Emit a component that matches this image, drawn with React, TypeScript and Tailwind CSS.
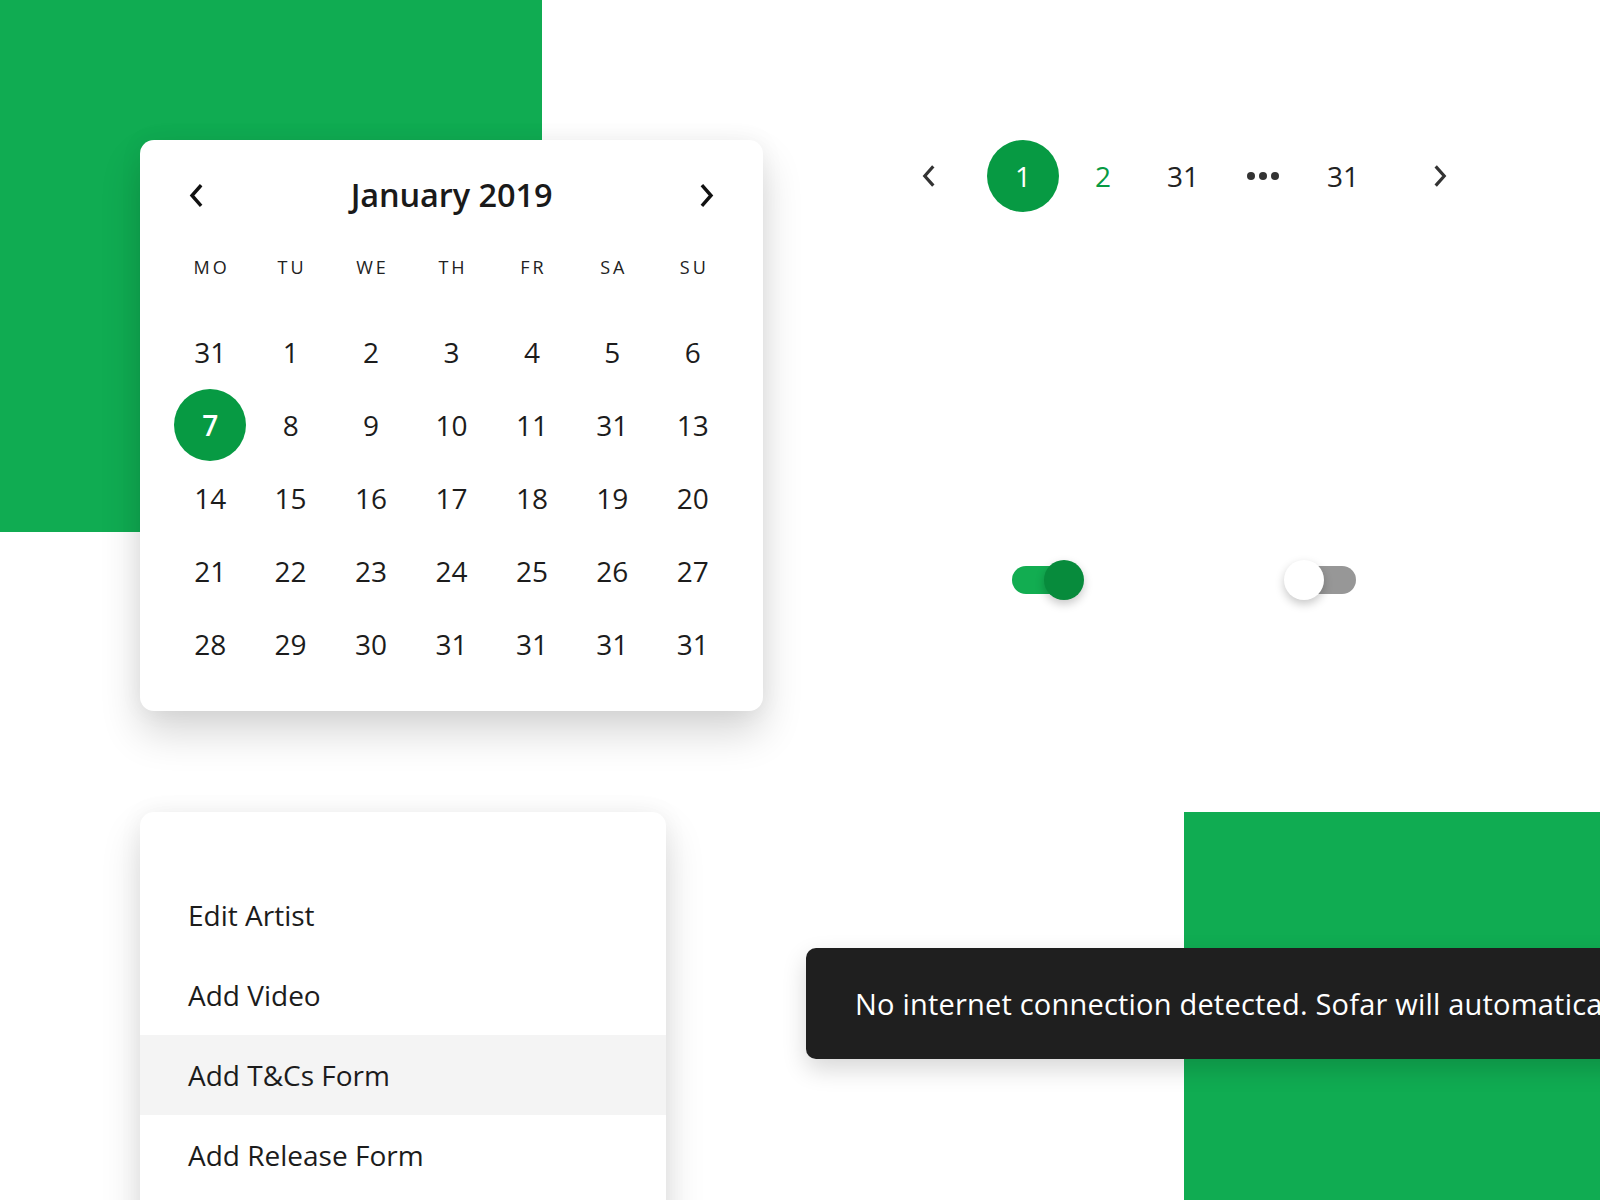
import React from 'react'

const weekDays = ['MO', 'TU', 'WE', 'TH', 'FR', 'SA', 'SU']

const weeks: number[][] = [
  [31, 1, 2, 3, 4, 5, 6],
  [7, 8, 9, 10, 11, 31, 13],
  [14, 15, 16, 17, 18, 19, 20],
  [21, 22, 23, 24, 25, 26, 27],
  [28, 29, 30, 31, 31, 31, 31],
]

const menuItems = ['Edit Artist', 'Add Video', 'Add T&Cs Form', 'Add Release Form']

const Chevron = ({ dir, className }: { dir: 'left' | 'right'; className?: string }) => (
  <svg viewBox="0 0 16 24" className={className} fill="none" stroke="currentColor" strokeWidth={3.4} strokeLinecap="square">
    {dir === 'left' ? <path d="M12 3 L4 12 L12 21" /> : <path d="M4 3 L12 12 L4 21" />}
  </svg>
)

const Calendar: React.FC = () => {
  const selected = 7
  return (
    <div className="w-[623px] h-[571px] bg-white rounded-[14px] shadow-[0_22px_40px_rgba(0,0,0,0.16),0_0_24px_rgba(0,0,0,0.05)] px-[30px] pt-[35px]">
      <div className="flex items-center justify-between h-[40px] px-[18px]">
        <Chevron dir="left" className="w-[16px] h-[25px] text-[#111]" />
        <h2 className="text-[32.5px] font-semibold text-[#1a1a1a] tracking-[-0.1px]">January 2019</h2>
        <Chevron dir="right" className="w-[16px] h-[25px] text-[#111]" />
      </div>
      <div className="grid grid-cols-7 mt-[39px]">
        {weekDays.map((d) => (
          <div key={d} className="text-center text-[18px] tracking-[3px] text-[#222] pl-[3px]">
            {d}
          </div>
        ))}
      </div>
      <div className="grid grid-cols-7 mt-[34px]">
        {weeks.flat().map((n, i) => (
          <div key={i} className="h-[73px] flex items-center justify-center">
            {i === selected ? (
              <span className="w-[72px] h-[72px] rounded-full bg-[#079a43] text-white flex items-center justify-center text-[28px] font-semibold">
                {n}
              </span>
            ) : (
              <span className="text-[28px] text-[#1c1c1c]">{n}</span>
            )}
          </div>
        ))}
      </div>
    </div>
  )
}

const ActionMenu: React.FC = () => (
  <div className="w-[526px] h-[420px] bg-white rounded-[14px] shadow-[0_20px_40px_rgba(0,0,0,0.14),0_0_24px_rgba(0,0,0,0.05)] pt-[63px] mt-[101px]">
    {menuItems.map((item, i) => (
      <div
        key={item}
        className={`h-[80px] flex items-center pl-[48px] text-[28px] text-[#1c1c1c] ${i === 2 ? 'bg-[#f4f4f4]' : ''}`}
      >
        {item}
      </div>
    ))}
  </div>
)

const Pagination: React.FC = () => (
  <div className="flex items-center h-[72px] ml-[82px]">
    <div className="w-[80px] flex justify-center">
      <Chevron dir="left" className="w-[15px] h-[24px] text-[#333]" />
    </div>
    <div className="flex items-center h-[72px] ml-[15px] text-[28px]">
      <div className="w-[80px] flex justify-center">
        <span className="w-[72px] h-[72px] rounded-full bg-[#079a43] text-white flex items-center justify-center">1</span>
      </div>
      <div className="w-[80px] flex justify-center text-[#079a43]">2</div>
      <div className="w-[80px] flex justify-center text-[#222]">31</div>
      <div className="w-[80px] flex justify-center items-center gap-[4px]">
        <span className="w-[8px] h-[8px] rounded-full bg-[#333]" />
        <span className="w-[8px] h-[8px] rounded-full bg-[#333]" />
        <span className="w-[8px] h-[8px] rounded-full bg-[#333]" />
      </div>
      <div className="w-[80px] flex justify-center text-[#222]">31</div>
    </div>
    <div className="w-[80px] flex justify-center ml-[17px]">
      <Chevron dir="right" className="w-[15px] h-[24px] text-[#333]" />
    </div>
  </div>
)

const Toggle = ({ on }: { on: boolean }) => (
  <div className="relative w-[72px] h-[40px]">
    <div
      className={`absolute top-[6px] h-[28px] w-[64px] rounded-full ${on ? 'left-0 bg-[#12ad51]' : 'left-[8px] bg-[#979797]'}`}
    />
    <div
      className={`absolute top-0 w-[40px] h-[40px] rounded-full shadow-[0_4px_10px_rgba(0,0,0,0.22)] ${on ? 'right-0 bg-[#078b3c]' : 'left-0 bg-white'}`}
    />
  </div>
)

export default function App() {
  return (
    <div
      className="relative w-[1600px] h-[1200px] overflow-hidden bg-white"
      style={{ fontFamily: '"Open Sans", "Noto Sans", sans-serif' }}
    >
      {/* green backdrop blocks */}
      <div className="absolute left-0 top-0 w-[542px] h-[532px] bg-[#10ac52]" />
      <div className="absolute left-[1184px] top-[812px] w-[416px] h-[388px] bg-[#10ac52]" />

      <div className="relative flex">
        <div className="w-[806px] shrink-0 pl-[140px] pt-[140px]">
          <Calendar />
          <ActionMenu />
        </div>
        <div className="flex-1 pt-[140px]">
          <Pagination />
          <div className="flex items-center gap-[200px] mt-[348px] ml-[206px]">
            <Toggle on />
            <Toggle on={false} />
          </div>
          <div className="mt-[348px] w-[900px] h-[111px] bg-[#1f1f1f] rounded-[10px] shadow-[0_10px_24px_rgba(0,0,0,0.16)] flex items-center pl-[49px] whitespace-nowrap">
            <span className="text-white text-[29px] font-medium tracking-[0.2px]">
              No internet connection detected. Sofar will automatically try to reconnect.
            </span>
          </div>
        </div>
      </div>
    </div>
  )
}
